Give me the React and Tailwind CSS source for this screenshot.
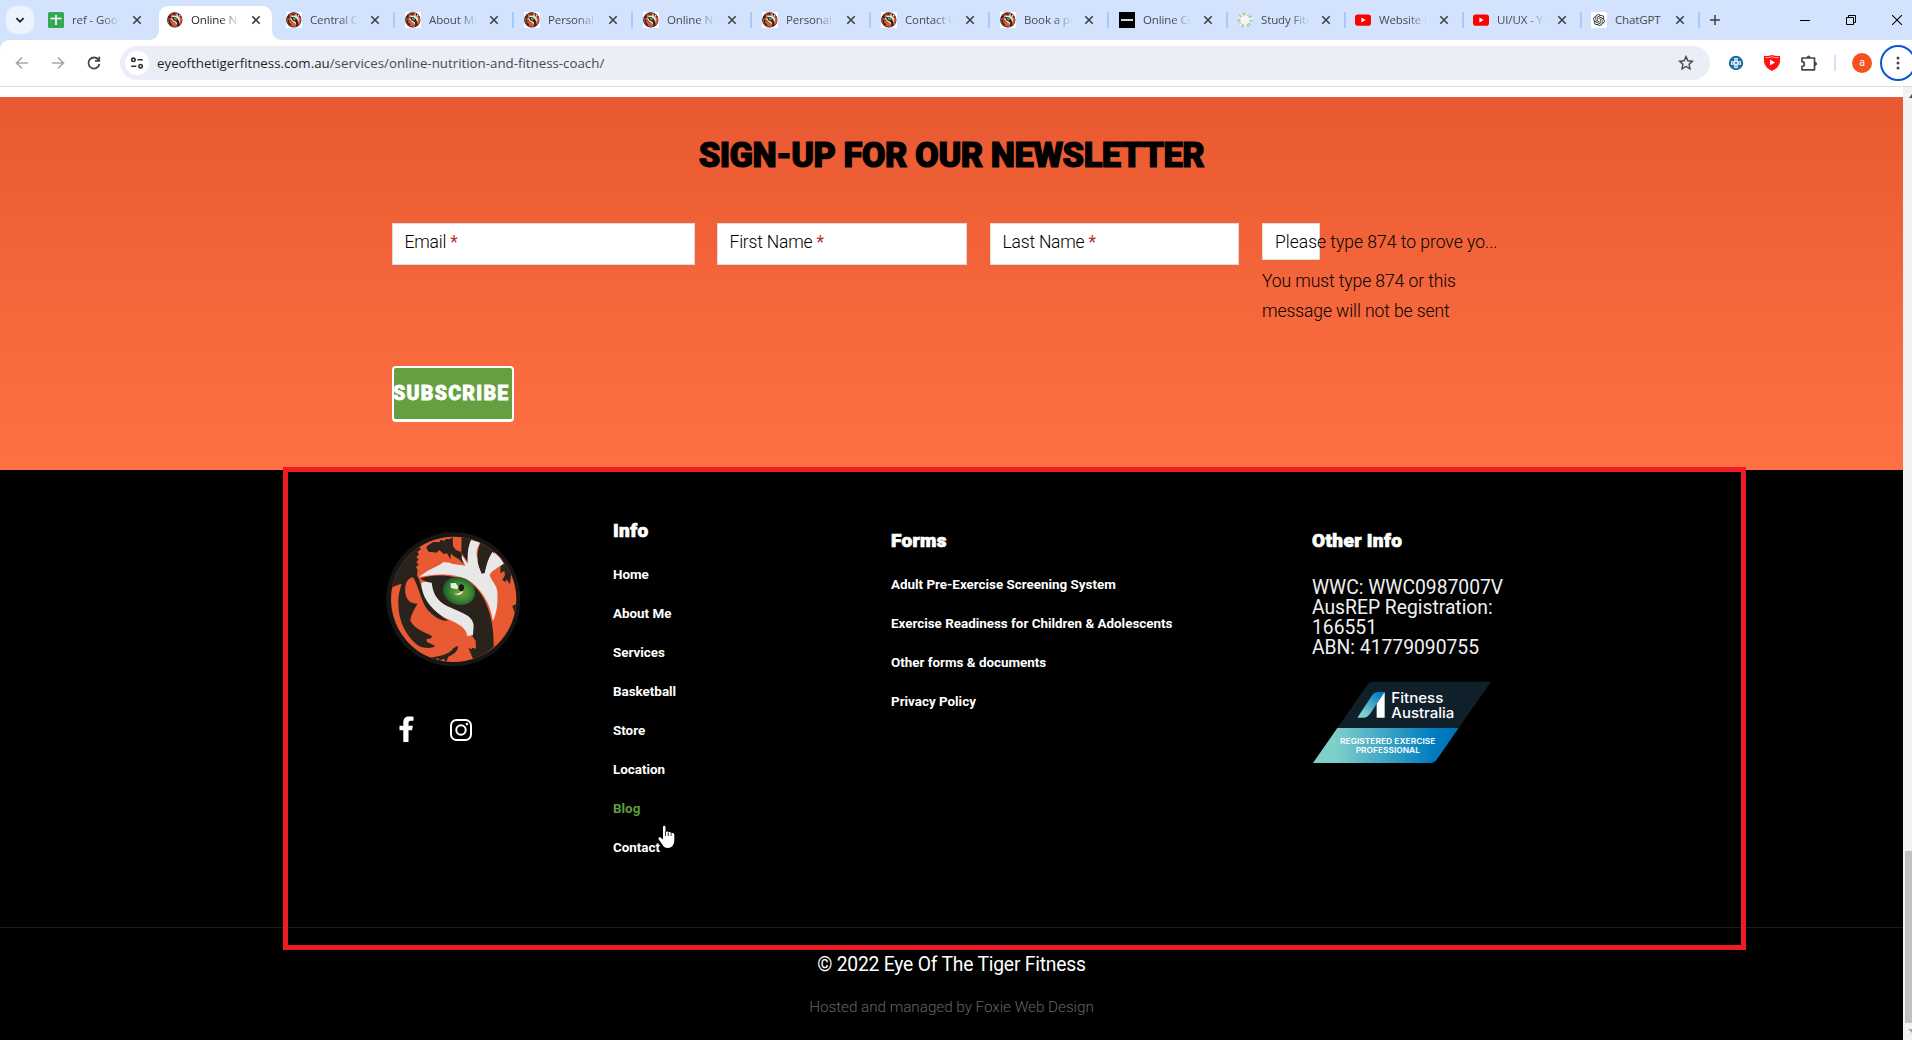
import React from 'react';
import { RiOpenaiFill } from 'react-icons/ri';

const TABS = [
  { title: 'ref - Goog', icon: 'sheets' },
  { title: 'Online Nu', icon: 'tiger', active: true },
  { title: 'Central Co', icon: 'tiger' },
  { title: 'About Me', icon: 'tiger' },
  { title: 'Personal T', icon: 'tiger' },
  { title: 'Online Nu', icon: 'tiger' },
  { title: 'Personal T', icon: 'tiger' },
  { title: 'Contact U', icon: 'tiger' },
  { title: 'Book a po', icon: 'tiger' },
  { title: 'Online Co', icon: 'black', narrow: true },
  { title: 'Study Fitn', icon: 'ring', narrow: true },
  { title: 'Website L', icon: 'youtube', narrow: true },
  { title: 'UI/UX - Yo', icon: 'youtube', narrow: true },
  { title: 'ChatGPT', icon: 'gpt', narrow: true },
];

const INFO_LINKS = ['Home', 'About Me', 'Services', 'Basketball', 'Store', 'Location', 'Blog', 'Contact'];
const FORM_LINKS = [
  'Adult Pre-Exercise Screening System',
  'Exercise Readiness for Children & Adolescents',
  'Other forms & documents',
  'Privacy Policy',
];

function TigerEye({ className }) {
  return (
    <svg viewBox="0 0 420 420" className={className}>
      <defs>
        <clipPath id="eyeClip"><circle cx="206" cy="208" r="188" /></clipPath>
        <radialGradient id="iris" cx="0.55" cy="0.5" r="0.55">
          <stop offset="0" stopColor="#7aa53a" />
          <stop offset="0.55" stopColor="#3f8a35" />
          <stop offset="1" stopColor="#1c5a2c" />
        </radialGradient>
      </defs>
      <circle cx="205" cy="208" r="201" fill="#171616" />
      <g clipPath="url(#eyeClip)">
        <rect width="420" height="420" fill="#ea5a32" />
        <g fill="#2a231c">
          <path d="M10 182C16 90 60 60 112 36L103 52L108 58L97 66L102 72L94 82L101 88L94 97L101 103L93 112L98 120L96 136L104 152L110 175C125 215 150 250 190 272C165 275 145 258 128 240C108 215 100 165 84 142C66 144 58 165 61 190C66 212 76 221 97 221C90 236 78 252 76 272C90 298 116 304 141 318L138 325L124 328L126 336L150 347C144 356 118 356 100 347C66 322 40 276 40 222C39 198 44 180 50 162C36 164 24 170 10 182Z" />
          <path d="M124 55L127 47L145 36L163 37L166 30L178 32L184 26L192 28L203 22L204 48L213 60L228 66L236 90L245 104L232 98L222 88L204 77L198 70L196 88L186 70L176 72L163 60L154 68L140 66L132 67Z" />
          <path d="M230 10L262 24L250 55L248 98L240 84L229 68Z" />
          <path d="M278 20L340 55L330 66C314 78 308 98 300 128L290 132L283 116C276 96 274 70 286 38Z" />
          <path d="M350 85L380 120L375 163L364 148L362 156L352 150L360 135L358 122L347 130L346 117Z" />
          <path d="M105 146C150 130 210 134 255 158C300 188 328 260 326 350L270 400L250 354L259 358L262 353L273 356L272 332L264 322C262 300 230 280 190 262C150 242 126 200 130 157Z" />
          <path d="M130 384C150 380 190 378 206 354L219 347C220 362 208 372 190 380L184 396L176 386L164 392L160 385L130 392Z" />
          <path d="M382 228L398 220V260L389 248Z" />
        </g>
        <path fill="#e9e8e8" d="M104 139L132 120C150 112 166 104 176 96L194 98L200 101L242 107C234 96 228 86 231 76L248 101C248 78 247 55 258 30L285 38C276 54 272 66 277 84C277 102 284 116 290 131L299 130C304 104 310 84 322 66C336 73 348 86 357 101C340 112 322 120 314 134C318 152 334 162 337 184C338 210 339 240 324 273C316 222 296 190 262 158C222 130 160 128 104 141Z" />
        <path fill="#e9e8e8" d="M109 158C120 154 132 158 140 158C144 190 156 212 186 228C222 246 264 254 266 286L264 314L247 319C244 296 226 284 190 268C146 246 110 208 109 158Z" />
        <ellipse cx="222" cy="183" rx="49" ry="41" transform="rotate(20 222 183)" fill="url(#iris)" />
        <path fill="#e8f0e0" d="M196 160L212 159L220 172L216 178L198 174Z M206 190C218 194 226 186 234 182C232 194 218 200 206 190Z" />
        <ellipse cx="229" cy="173" rx="8" ry="10" fill="#1c1812" />
      </g>
    </svg>
  );
}

function Favicon({ kind }) {
  if (kind === 'sheets')
    return (
      <svg viewBox="0 0 16 16" className="size-4 shrink-0">
        <rect width="16" height="16" rx="1.5" fill="#34a853" />
        <path d="M8 3v10M2.5 6.5h11" stroke="#fff" strokeWidth="1.6" />
      </svg>
    );
  if (kind === 'tiger')
    return (
      <div className="size-4 shrink-0 bg-white">
        <TigerEye className="size-4" />
      </div>
    );
  if (kind === 'black')
    return (
      <div className="flex size-4 shrink-0 items-center justify-center bg-black">
        <div className="h-[2px] w-3 bg-gray-300" />
      </div>
    );
  if (kind === 'ring')
    return (
      <svg viewBox="0 0 16 16" className="size-4 shrink-0" fill="none" strokeWidth="3">
        <circle cx="8" cy="8" r="6.2" fill="#f4f6f5" stroke="#efeee4" />
        <circle cx="8" cy="8" r="6.2" stroke="#8fd5a0" strokeDasharray="1.6 4" />
        <circle cx="8" cy="8" r="6.2" stroke="#f6b2a0" strokeDasharray="1.3 7" strokeDashoffset="2" />
        <circle cx="8" cy="8" r="6.2" stroke="#8fc5ee" strokeDasharray="1.5 6" strokeDashoffset="4" />
      </svg>
    );
  if (kind === 'youtube')
    return (
      <svg viewBox="0 0 16 16" className="size-4 shrink-0">
        <rect y="2.4" width="16" height="11.3" rx="2.8" fill="#f00" />
        <path d="M6.4 5.6v4.8L10.6 8z" fill="#fff" />
      </svg>
    );
  return (
    <div className="flex size-4 shrink-0 items-center justify-center rounded-[2px] bg-white">
      <RiOpenaiFill className="size-[14px] text-[#222]" />
    </div>
  );
}

function Cross({ className }) {
  return (
    <svg viewBox="0 0 16 16" className={className} fill="none" stroke="currentColor" strokeWidth="1.6">
      <path d="M4.3 4.3l7.4 7.4M11.7 4.3l-7.4 7.4" />
    </svg>
  );
}

function Tab({ tab, divider }) {
  return (
    <div className={`relative flex h-[34px] shrink-0 pt-[2px] ${tab.narrow ? 'w-[118px]' : 'w-[119px]'}`}>
      {tab.active && (
        <svg viewBox="0 0 133 34" className="absolute -left-[10px] top-0 h-[34px] w-[133px]" fill="#fff">
          <path d="M0 34C6 34 10 30 10 24V10C10 4 14 0 20 0H113C119 0 123 4 123 10V24C123 30 127 34 133 34Z" />
        </svg>
      )}
      <div className="relative flex h-[28px] flex-1 items-center pl-2 pb-[4px]">
        <Favicon kind={tab.icon} />
        <div
          className={`ml-2 w-[49px] shrink-0 overflow-hidden font-['Open_Sans',sans-serif] text-[11.5px] leading-4 tracking-[-0.12px] whitespace-nowrap ${
            tab.active ? 'text-[#1f1f1f]' : 'text-[#474a4f]'
          } ${tab.icon === 'gpt' ? '' : '[mask-image:linear-gradient(to_right,#000_60%,transparent_98%)]'}`}
        >
          {tab.title}
        </div>
        <Cross className="ml-[7.5px] size-4 shrink-0 text-[#3c4043]" />
        {divider && <div className="ml-[10.5px] h-4 w-[2px] shrink-0 rounded-full bg-[#a8c7fa]" />}
      </div>
    </div>
  );
}

function TabStrip() {
  return (
    <div className="flex h-10 overflow-hidden bg-[#d3e3fd] pt-[6px] pl-[6px]">
      <div className="mr-[6px] flex size-7 shrink-0 items-center justify-center rounded-[10px] bg-[#ecf2fe]">
        <svg viewBox="0 0 12 12" className="size-3" fill="none" stroke="#1f1f1f" strokeWidth="1.8">
          <path d="M2.4 4.2L6 7.8l3.6-3.6" />
        </svg>
      </div>
      {TABS.map((tab, i) => (
        <Tab key={i} tab={tab} divider={i > 1} />
      ))}
      <div className="flex h-7 w-7 shrink-0 items-center justify-center">
        <svg viewBox="0 0 12 12" className="size-3" stroke="#3c4043" strokeWidth="1.5">
          <path d="M6 1v10M1 6h10" />
        </svg>
      </div>
      <div className="ml-[53px] flex h-7 shrink-0 items-center">
        <div className="flex w-[46px] justify-center"><div className="h-px w-[10px] bg-black" /></div>
        <div className="flex w-[46px] justify-center">
          <svg viewBox="0 0 10 10" className="size-[10px]" fill="none" stroke="#000">
            <path d="M.5 2.5h7v7h-7zM2.5 2.5v-2h7v7h-2" />
          </svg>
        </div>
        <div className="flex w-[46px] justify-center">
          <svg viewBox="0 0 10 10" className="size-[10px]" stroke="#000" strokeWidth="1.1"><path d="M0 0l10 10M10 0L0 10" /></svg>
        </div>
      </div>
    </div>
  );
}

function Toolbar() {
  return (
    <div className="bg-[#d3e3fd]">
      <div className="flex h-[47px] items-start overflow-hidden rounded-tl-[9px] border-b border-[#dcdcdc] bg-white pt-[6px]">
        <div className="flex h-[34px] w-[120px] shrink-0 items-center pl-[14px]">
          <svg viewBox="0 0 16 16" className="size-4 shrink-0" fill="none" stroke="#a6a6a6" strokeWidth="1.6">
            <path d="M14 8H2.8M8 2.5L2.5 8 8 13.5" />
          </svg>
          <svg viewBox="0 0 16 16" className="ml-5 size-4 shrink-0" fill="none" stroke="#a6a6a6" strokeWidth="1.6">
            <path d="M2 8h11.2M8 2.5L13.5 8 8 13.5" />
          </svg>
          <svg viewBox="0 0 16 16" className="ml-5 size-4 shrink-0" fill="none" stroke="#474747" strokeWidth="1.8">
            <path d="M12.6 5A5.5 5.5 0 1 0 13.4 9" />
            <path d="M13.2 1.8v4H9" />
          </svg>
        </div>
        <div className="flex h-[34px] w-[1590px] shrink-0 items-center rounded-full bg-[#ebeef7] pr-4 pl-[5px]">
          <div className="flex size-6 items-center justify-center rounded-full bg-white">
            <svg viewBox="0 0 14 14" className="size-[14px]" fill="none" stroke="#303030" strokeWidth="1.6">
              <circle cx="3.4" cy="3.8" r="1.7" />
              <path d="M7.5 3.8h5.2M1.2 10.2h5.2" />
              <circle cx="10.6" cy="10.2" r="1.7" />
            </svg>
          </div>
          <div className="ml-2 font-['Open_Sans',sans-serif] text-[13.3px] leading-5 whitespace-nowrap text-[#474a4f]">
            <span className="text-[#1f1f1f]">eyeofthetigerfitness.com.au</span>/services/online-nutrition-and-fitness-coach/
          </div>
          <svg viewBox="0 0 16 16" className="ml-auto size-4" fill="none" stroke="#474747" strokeWidth="1.4">
            <path d="M8 1.6l1.9 4.2 4.5.5-3.3 3 .9 4.5L8 11.5l-4 2.3.9-4.5-3.3-3 4.5-.5z" />
          </svg>
        </div>
        <div className="flex h-[34px] shrink-0 items-center">
          <svg viewBox="0 0 16 16" className="ml-[18px] size-4 shrink-0">
            <circle cx="8" cy="8" r="7.2" fill="#1f6f9f" />
            <path d="M6.2 3h3.6v3.2H13v3.6H9.8V13H6.2V9.8H3V6.2h3.2z" fill="#e6f2fa" />
            <g fill="#1f6f9f">
              <rect x="7.1" y="7.1" width="1.8" height="1.8" />
              <circle cx="8" cy="4.7" r=".7" /><circle cx="8" cy="11.3" r=".7" />
              <circle cx="4.7" cy="8" r=".7" /><circle cx="11.3" cy="8" r=".7" />
            </g>
          </svg>
          <svg viewBox="0 0 16 16" className="ml-5 size-4 shrink-0">
            <path d="M0 .8Q4 1.5 8 0q4 1.500 8 .8V6.500Q15.500 12.500 8 16Q.5 12.500 0 6.500Z" fill="#f11" />
            <path d="M1.600 2.600Q5 3 8 1.800q3 1.200 6.400 .8" fill="none" stroke="#fff" strokeWidth=".6" />
            <path d="M6 4.500v6L11 7.500z" fill="#fff" />
          </svg>
          <svg viewBox="0 0 18 18" className="ml-[20px] size-[18px] shrink-0" fill="none" stroke="#474747" strokeWidth="1.7" strokeLinejoin="round">
            <path d="M2 4h12.500v11.800H2v-3.400a2.200 2.200 0 0 0 0-4.700z" />
            <path d="M7 3.600a1.600 1.600 0 0 1 3.200 0zM15 8.200a1.600 1.600 0 0 1 0 3.200z" fill="#474747" strokeWidth="1" />
          </svg>
          <div className="ml-[16px] h-4 w-[2px] bg-[#d3e3fd]" />
          <div className="ml-4 flex size-5 shrink-0 items-center justify-center rounded-full bg-[#f4511e] font-['Roboto',sans-serif] text-[10.5px] leading-none text-white">a</div>
          <div className="-my-2 ml-2 flex size-9 shrink-0 items-center justify-center rounded-full border-2 border-[#0b57d0]">
            <svg viewBox="0 0 4 16" className="h-4 w-1" fill="#474747">
              <circle cx="2" cy="3" r="1.5" /><circle cx="2" cy="8" r="1.5" /><circle cx="2" cy="13" r="1.5" />
            </svg>
          </div>
        </div>
      </div>
    </div>
  );
}

function Field({ label, className }) {
  return (
    <div className={`h-[42px] border border-[#dcdcdc] bg-white pl-[11.5px] text-[17.5px] leading-9 font-light tracking-[-0.2px] text-black ${className}`}>
      {label} <span className="font-normal text-[#b92c28]">*</span>
    </div>
  );
}

function Newsletter() {
  return (
    <section className="mt-[10px] h-[373px] bg-linear-to-b from-[#e95931] to-[#ff7144] pt-[38px]">
      <h2 className="text-center text-[34.5px] leading-10 font-black tracking-[-0.55px] text-black [-webkit-text-stroke:1.1px_#000]">
        SIGN-UP FOR OUR NEWSLETTER
      </h2>
      <div className="mt-12 flex h-[103px] items-start pl-[392px]">
        <Field label="Email" className="w-[303px]" />
        <Field label="First Name" className="ml-[22px] w-[250px]" />
        <Field label="Last Name" className="ml-[23px] w-[249px]" />
        <div className="ml-[23px] w-[240px] text-[17.5px] font-light text-black">
          <div className="h-[37px] w-[58px] border border-[#dcdcdc] bg-white pl-3 leading-9 whitespace-nowrap">Please type 874 to prove yo...</div>
          <p className="mt-[6px] leading-[30px] tracking-[-0.08px]">
            You must type 874 or this
            <br />
            message will not be sent
          </p>
        </div>
      </div>
      <div className="mt-10 ml-[392px] flex h-14 w-[122px] items-center rounded-[4px] border-2 border-b-[3px] border-white bg-[#649f40] pt-px text-[19.5px] leading-none font-black tracking-[1.3px] whitespace-nowrap text-white [-webkit-text-stroke:0.8px_#fff]">
        <span className="-ml-[1px]">SUBSCRIBE</span>
      </div>
    </section>
  );
}

function FooterHeading({ children }) {
  return (
    <h3 className="text-[19px] leading-6 font-black tracking-[0.35px] text-white [-webkit-text-stroke:0.7px_#fff]">{children}</h3>
  );
}

function LinkList({ links, active }) {
  return (
    <ul className="mt-3 text-[13.4px] leading-[39px] font-bold whitespace-nowrap">
      {links.map((l) => (
        <li key={l} className={l === active ? 'text-[#5f9e3c]' : 'text-white'}>{l}</li>
      ))}
    </ul>
  );
}

function FitnessBadge() {
  return (
    <svg viewBox="66 543 540 246" className="mt-[23px] h-[82px] w-[180px]">
      <defs>
        <linearGradient id="band" x1="0" x2="1"><stop offset=".15" stopColor="#7fd0ca" /><stop offset=".82" stopColor="#007dc0" /><stop offset="1" stopColor="#0070bd" /></linearGradient>
        <linearGradient id="mark" x1="0" y1="1" x2="1" y2="0"><stop offset=".2" stopColor="#7fd0ca" /><stop offset=".9" stopColor="#0078c4" /></linearGradient>
      </defs>
      <path d="M248 545H603L506 684H142L228 560Q238 545 248 545Z" fill="#10202b" />
      <path d="M142 684H506L442 776Q433 789 420 789H69Z" fill="url(#band)" />
      <path d="M202 653L247 585Q253 576 262 576H284L240 642Q232 653 220 653Z" fill="url(#mark)" />
      <path d="M284 576V653H260V612Z" fill="#fff" />
      <g fill="#fff" fontFamily="Inter, sans-serif">
        <text x="304" y="608" fontSize="43" fontWeight="500" textLength="156" lengthAdjust="spacingAndGlyphs">Fitness</text>
        <text x="304" y="653" fontSize="43" fontWeight="500" textLength="189" lengthAdjust="spacingAndGlyphs">Australia</text>
        <text x="150" y="732" fontSize="24" fontWeight="600" textLength="286" lengthAdjust="spacingAndGlyphs">REGISTERED EXERCISE</text>
        <text x="197" y="759" fontSize="24" fontWeight="600" textLength="193" lengthAdjust="spacingAndGlyphs">PROFESSIONAL</text>
      </g>
    </svg>
  );
}

function Footer() {
  return (
    <footer className="h-[570px] bg-black">
      <div className="flex h-[457px] pt-[49px] pl-[385px]">
        <div className="w-[228px] shrink-0 pt-[11px]">
          <TigerEye className="size-[140px]" />
          <div className="mt-[46px] flex items-center pl-[14px]">
            <svg viewBox="0 0 15 26" className="h-[26px] w-[15px]" fill="#fff">
              <path d="M4.3 26V14.3H.5V9.7H4.3V6.3C4.3 2.5 6.5.5 10 .5C11.6.5 14.5.7 14.5.7V4.7H12C10 4.7 9.5 5.7 9.5 7V9.7H13.8L13.1 14.3H9.5V26Z" />
            </svg>
            <svg viewBox="0 0 22 22" className="mt-px ml-[36px] size-[22px]" fill="none" stroke="#fff" strokeWidth="2">
              <rect x="1" y="1" width="20" height="20" rx="5.5" />
              <circle cx="11" cy="11" r="4.7" />
              <circle cx="16.9" cy="5.1" r="1.3" fill="#fff" stroke="none" />
            </svg>
          </div>
        </div>
        <div className="w-[278px] shrink-0">
          <FooterHeading>Info</FooterHeading>
          <LinkList links={INFO_LINKS} active="Blog" />
        </div>
        <div className="w-[421px] shrink-0 pt-[10px]">
          <FooterHeading>Forms</FooterHeading>
          <LinkList links={FORM_LINKS} />
        </div>
        <div className="w-[200px] pt-[10px]">
          <FooterHeading>Other Info</FooterHeading>
          <p className="mt-[25px] text-[19.3px] leading-5 text-[#f0f0f0]">
            WWC: WWC0987007V
            <br />
            AusREP Registration:
            <br />
            166551
            <br />
            ABN: 41779090755
          </p>
          <FitnessBadge />
        </div>
      </div>
      <div className="border-t border-[#1c1c1c] pt-[25px] text-center">
        <p className="text-[19.3px] leading-6 tracking-[-0.2px] text-white">© 2022 Eye Of The Tiger Fitness</p>
        <p className="mt-5 text-[15.3px] leading-5 font-light tracking-[-0.05px] text-[#646464]">Hosted and managed by Foxie Web Design</p>
      </div>
    </footer>
  );
}

function Scrollbar() {
  return (
    <div className="flex w-[9px] shrink-0 flex-col items-end overflow-hidden bg-[#f1f1f1]">
      <svg viewBox="0 0 3 17" className="h-[17px] w-[3px]"><path d="M0 11L3 7V11Z" fill="#505050" /></svg>
      <div className="mt-[747px] h-[172px] w-[7px] bg-[#c1c1c1]" />
      <svg viewBox="0 0 4 17" className="h-[17px] w-1"><path d="M0 6H4V10Z" fill="#a3a3a3" /></svg>
    </div>
  );
}

export default function App() {
  return (
    <div className="relative h-[1040px] w-[1912px] overflow-hidden bg-white">
      <TabStrip />
      <Toolbar />
      <div className="flex h-[953px]">
        <main className="w-[1903px] shrink-0 font-['Roboto',sans-serif]">
          <Newsletter />
          <Footer />
        </main>
        <Scrollbar />
      </div>
      <div className="absolute top-[467px] left-[283px] h-[483px] w-[1463px] border-[5px] border-[#ed1c24]" />
      <svg viewBox="0 0 17 23" className="absolute top-[825px] left-[658px] h-[23px] w-[17px]">
        <path
          d="M5 2.2C5 .2 7.5.2 7.5 2.2V7C9 6 10.2 6.5 10.3 7.5C11.5 6.7 12.9 7.2 13 8.3C14.5 7.6 16.3 8 16.3 10V15C16.3 20 13.5 23 10 23C6.8 23 5.5 21.5 4 19L.6 14.2C0 12.5 1.8 11.8 3 12.8L5 14.6Z"
          fill="#fff"
        />
        <path d="M7.5 6.5V11M10.3 7.5V11M13.1 8.3V11" stroke="#000" strokeWidth=".8" />
      </svg>
    </div>
  );
}
